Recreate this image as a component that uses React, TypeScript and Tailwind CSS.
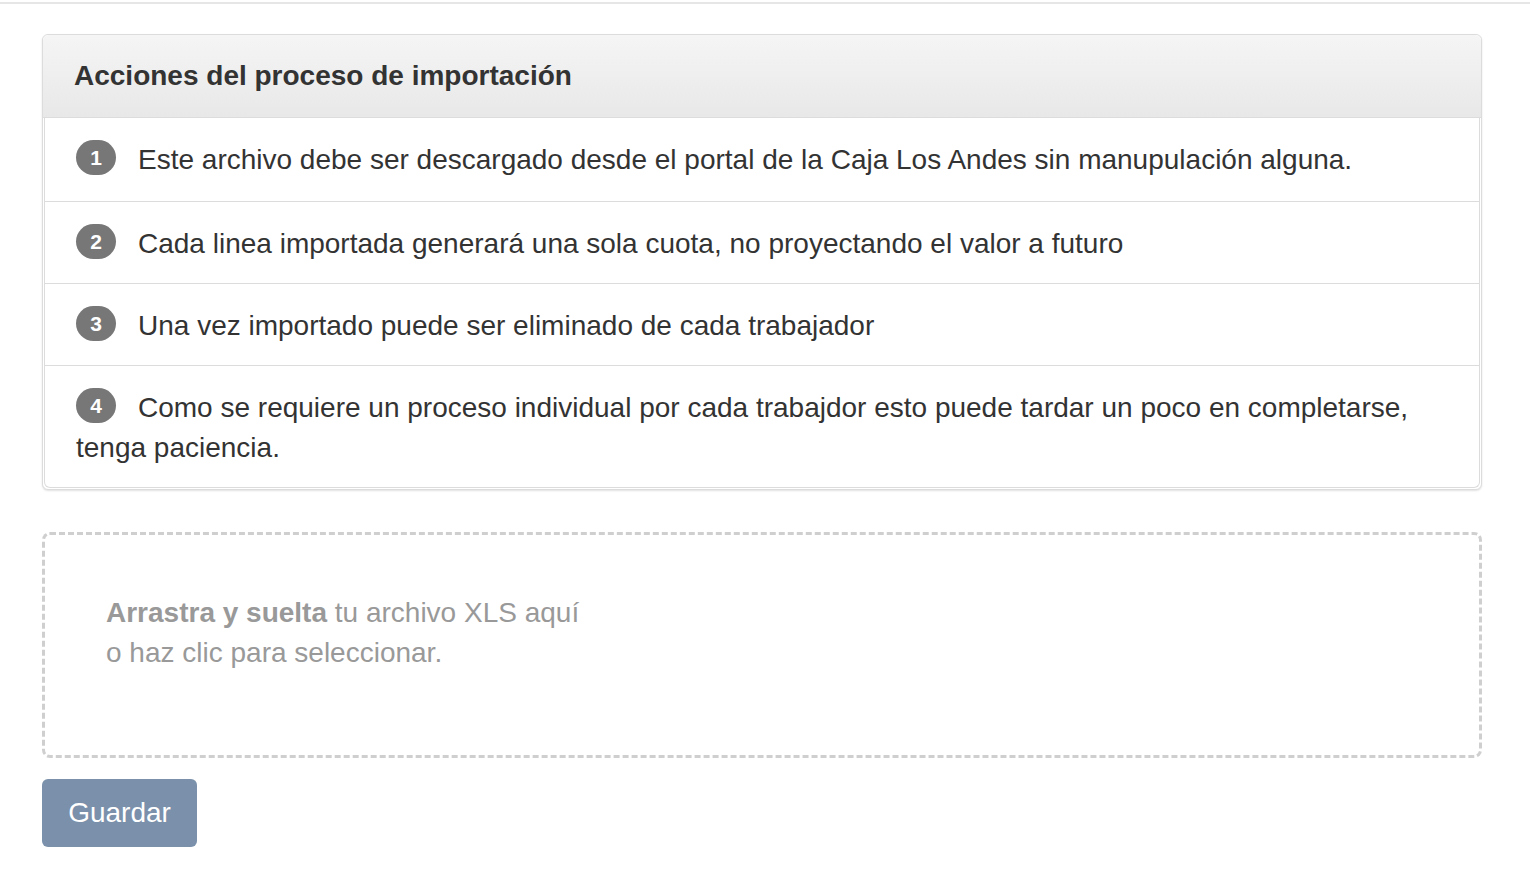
import React from "react";

const items: { n: number; text: string }[] = [
  { n: 1, text: "Este archivo debe ser descargado desde el portal de la Caja Los Andes sin manupulación alguna." },
  { n: 2, text: "Cada linea importada generará una sola cuota, no proyectando el valor a futuro" },
  { n: 3, text: "Una vez importado puede ser eliminado de cada trabajador" },
  { n: 4, text: "Como se requiere un proceso individual por cada trabajdor esto puede tardar un poco en completarse, tenga paciencia." },
];

export default function App() {
  return (
    <div className="min-h-screen bg-white text-[#333] font-['Liberation_Sans',Arial,sans-serif] pt-[2px]">
      <div className="h-[2px] bg-[#e6e6e6]" />
      <div className="px-[42px] pt-[30px] w-[1524px]">
        <div className="border border-[#dcdcdc] rounded-[6px] shadow-[0_1px_2px_rgba(0,0,0,0.12)] bg-white">
          <div className="h-[83px] flex items-center pl-[31px] bg-gradient-to-b from-[#f5f5f5] to-[#e8e8e8] rounded-t-[6px] border-b border-[#dcdcdc]">
            <h3 className="text-[28px] font-bold text-[#333] leading-none">Acciones del proceso de importación</h3>
          </div>
          <div className="mx-[1px] mb-[1px] border border-t-0 border-[#dcdcdc] rounded-b-[6px]">
            {items.map((it, i) => (
              <div
                key={it.n}
                className={`px-[31px] pt-[22px] text-[28px] leading-[40px] ${i > 0 ? "border-t border-[#dcdcdc] pb-[19px]" : "pb-[21px]"}`}
              >
                <span className="inline-flex items-center justify-center w-[40px] h-[35px] rounded-full bg-[#777] text-white text-[21px] font-bold align-[4px] mr-[22px] leading-none">
                  {it.n}
                </span>
                {it.text}
              </div>
            ))}
          </div>
        </div>

        <div className="mt-[42px] h-[226px] border-[3px] border-dashed border-[#cfcfcf] rounded-[8px] pt-[58px] px-[61px] text-[28px] leading-[40px] text-[#999]">
          <div>
            <span className="font-bold">Arrastra y suelta</span> tu archivo XLS aquí
          </div>
          <div>o haz clic para seleccionar.</div>
        </div>

        <button className="mt-[21px] h-[68px] w-[155px] rounded-[6px] bg-[#7a90ab] text-white text-[28px] flex items-center justify-center">
          Guardar
        </button>
      </div>
    </div>
  );
}
